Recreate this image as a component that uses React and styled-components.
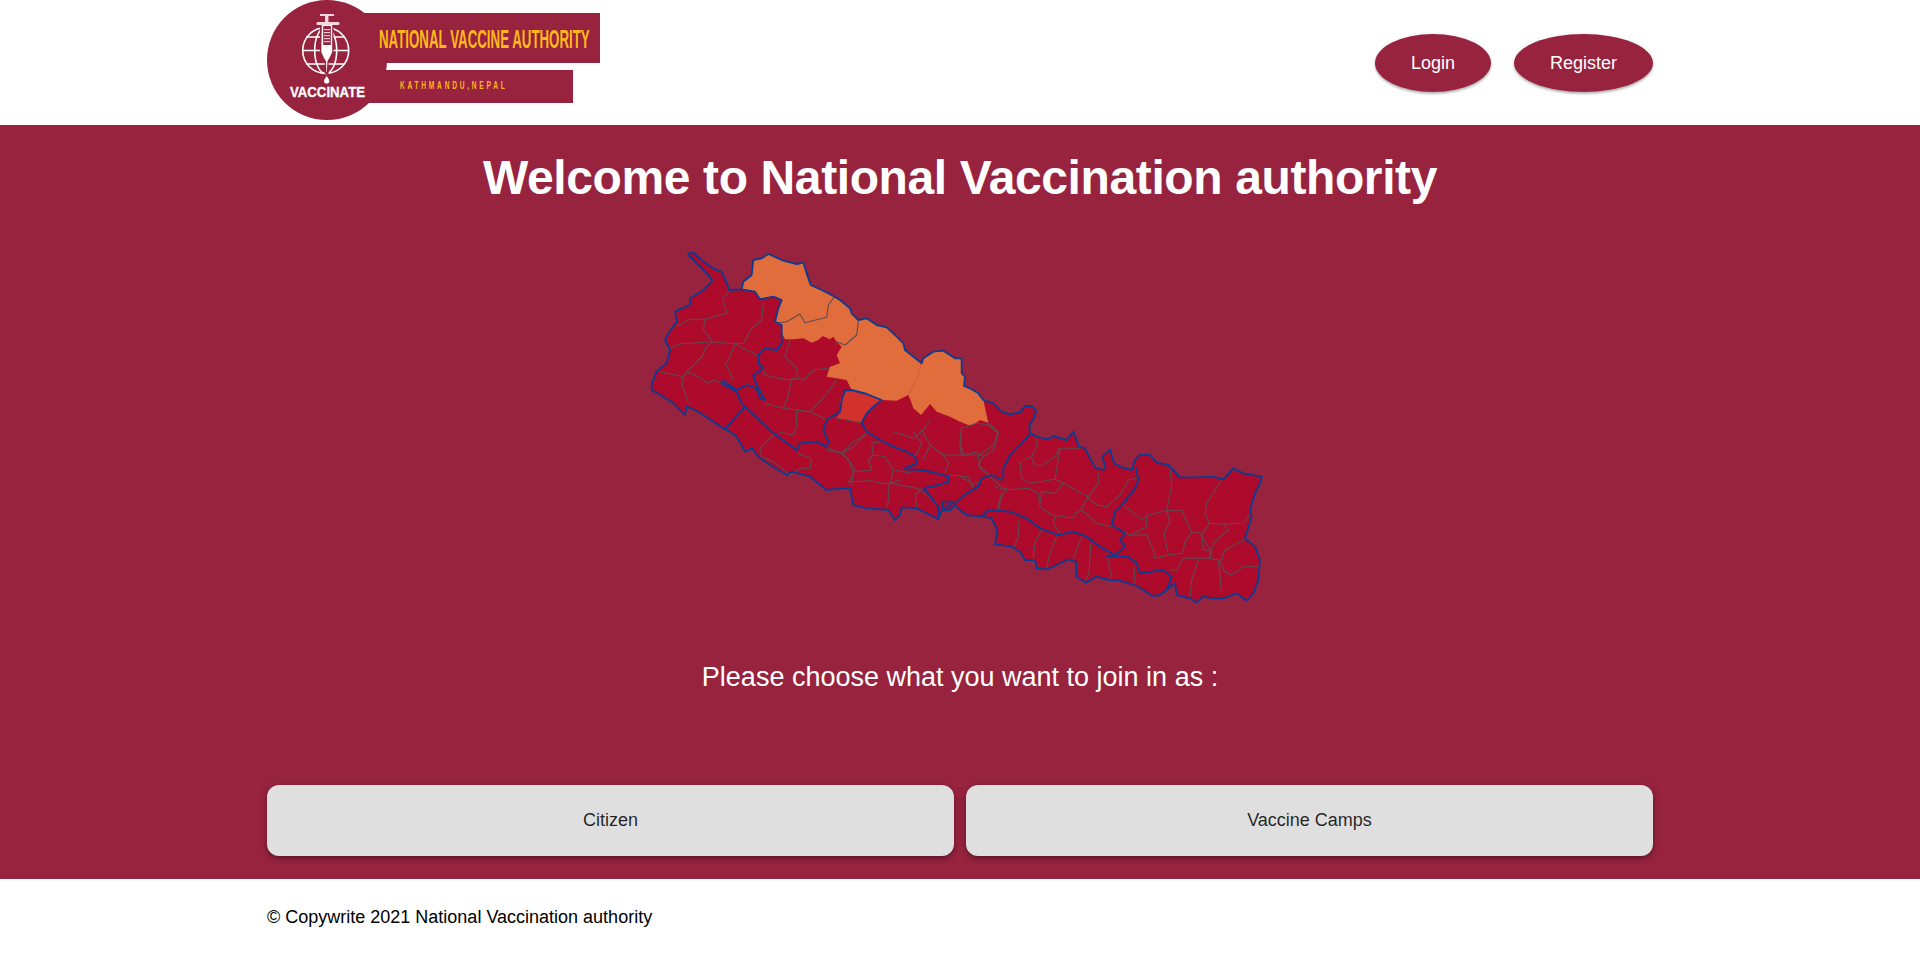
import React from "react";
import styled, { createGlobalStyle } from "styled-components";

const GlobalStyle = createGlobalStyle`
  html, body {
    margin: 0;
    padding: 0;
    background: #fff;
    font-family: "Liberation Sans", Arial, sans-serif;
  }
`;

const Header = styled.header`
  height: 125px;
  padding: 0 267px;
  box-sizing: border-box;
  display: flex;
  align-items: flex-start;
  justify-content: space-between;
  background: #fff;
`;

const Logo = styled.svg`
  width: 340px;
  height: 125px;
  display: block;
`;

const HeaderActions = styled.nav`
  display: flex;
  gap: 23px;
  padding-top: 34px;
`;

const PillButton = styled.button`
  width: ${(props) => props.$width}px;
  height: 58px;
  border: 0;
  padding: 0;
  border-radius: 50%;
  background: #97233f;
  color: #fff;
  font: 18px "Liberation Sans", Arial, sans-serif;
  box-shadow: 0 2px 2px rgba(0, 0, 0, 0.2), 0 1px 4px rgba(0, 0, 0, 0.14);
  cursor: pointer;
`;

const Main = styled.main`
  background: #97233f;
  padding: 25px 267px 23px;
  display: flex;
  flex-direction: column;
  align-items: center;
`;

const Title = styled.h1`
  margin: 0;
  font-size: 48px;
  line-height: 55px;
  letter-spacing: -0.39px;
  font-weight: 700;
  color: #fff;
`;

const MapFigure = styled.svg`
  display: block;
  width: 640px;
  height: 370px;
  margin-top: 35px;
`;

const Prompt = styled.p`
  margin: 52px 0 0;
  font-size: 27px;
  line-height: 31px;
  color: #fff;
`;

const Choices = styled.div`
  width: 100%;
  margin-top: 92px;
  display: grid;
  grid-template-columns: 1fr 1fr;
  gap: 12px;
`;

const ChoiceButton = styled.button`
  height: 71px;
  border: 0;
  border-radius: 12px;
  background: #dfdfdf;
  color: rgba(0, 0, 0, 0.85);
  font: 18px "Liberation Sans", Arial, sans-serif;
  box-shadow: 0 2px 4px -1px rgba(0, 0, 0, 0.2), 0 4px 5px rgba(0, 0, 0, 0.14),
    0 1px 10px rgba(0, 0, 0, 0.12);
  cursor: pointer;
`;

const Footer = styled.footer`
  height: 72px;
  padding: 2px 267px 0;
  display: flex;
  align-items: center;
  font-size: 18px;
  color: #000;
`;

// map traced from the picture, in 3x pixels of the (640,240) corner
const fromEast = (s) => shift(s, 960, 420);
const fromMid = (s) => shift(s, 510, 540);

function shift(s, dx, dy) {
  return s
    .trim()
    .split(/\s+/)
    .map((p) => {
      const [x, y] = p.split(",").map(Number);
      return `${x + dx},${y + dy}`;
    })
    .join(" ");
}

const northEdge =
  "305,148 310,125 335,105 340,60 365,55 385,42 430,62 470,72 490,68 500,100 512,135 545,150 580,168 600,180 630,205 635,220 655,240 680,235 710,255 740,262 770,290 790,310 795,330 845,370";

const outline = [
  "145,40 160,38 190,65 225,88 245,95 258,125 268,150",
  northEdge,
  "850,355 880,335 910,332 945,355 965,355 965,400 975,410 972,438 990,445 1015,460",
  fromEast("70,60 100,70 125,95 150,103 180,97 195,78 215,78 228,92 222,115 208,135 210,160 230,170 265,178 280,168 320,180 340,155 348,175 355,198 375,205 405,262 430,270 437,262 427,230 450,208 462,250 485,262 515,270 525,240 540,225 570,225 590,248 625,255 660,292 700,292 760,290 790,298 820,265 850,280 905,290 900,310 885,340 870,390 875,410 855,475 885,500 900,540 895,600 880,640 860,662 830,640 790,655 760,655 730,650 710,668 690,655 650,645 645,610 620,630 600,645 578,648 530,618 480,602 445,600 410,590 378,608 350,590 348,545 325,538 290,555 260,568 230,565 225,540 195,540 180,515 155,500 105,493 112,450 95,415 65,410 20,405 0,390"),
  fromMid("435,255 420,270 395,272 385,297 380,295 360,285 320,265 275,262 270,285 255,300 235,270 170,265 130,255 120,205 100,205 50,210"),
  "510,710 455,695 440,705 390,675 355,650 335,625 315,635 290,590 258,568 250,565 190,525 165,510 140,500 135,525 100,490 70,470 35,450 35,430 50,395 60,385 80,370 85,350 90,330 75,300 85,280 110,245 105,215 125,205 150,195 150,175 190,150 218,122 200,100 170,70 145,45 145,40",
].join(" ");

const orangeAreas = [
  `${northEdge} 830,420 805,465 770,482 725,480 680,460 635,450 620,420 590,415 560,410 570,380 600,370 590,345 605,320 590,305 580,290 570,298 548,288 535,300 515,308 490,295 460,298 435,298 425,280 425,255 405,245 415,205 425,180 400,170 360,178 345,155`,
  "845,370 850,355 880,335 910,332 945,355 965,355 965,400 975,410 972,438 990,445 1015,460 1030,480 1045,548 1020,540 1000,555 985,555 960,545 930,530 890,515 870,492 843,525 820,505 815,490 805,465 830,420",
];

const darkArea =
  "615,452 635,450 680,462 725,480 700,500 680,520 665,548 620,540 590,535 605,510 600,480";

const districtLines = [
  "268,150 248,180 262,220 195,238 150,238 110,258",
  "195,238 190,270 218,305 120,312 80,330",
  "370,190 365,240 335,265 310,310 285,312 218,305 195,325 190,345 140,395 175,410 205,430 225,420 245,430",
  "285,312 265,360 255,368 280,420",
  "285,312 350,345",
  "60,395 130,410 125,430 145,490",
  "130,410 140,395",
  "370,385 375,405 440,420 470,415 490,420 520,390 565,385",
  "435,350 450,300",
  "435,350 470,385 475,415 455,420 440,480 430,505 370,490",
  "430,505 510,515 545,480 590,420",
  "510,515 470,510 470,560 460,585 415,575",
  "510,515 560,540",
  "412,585 400,585 360,625 365,650 400,665 450,705",
  "450,705 480,685 510,685 515,655 470,640",
  "590,305 615,315 650,285 655,245",
  "405,250 440,245 480,222 495,248 560,232 565,195 585,168",
  "590,535 620,540 665,548",
  "565,625 605,640 640,605 680,580",
  "605,635 625,660 640,695 635,735",
  ...[
    "50,90 95,100 120,125 135,150 115,190",
    "95,100 130,80 165,45",
    "135,155 185,150 175,120 190,105 185,70 210,65",
    "190,105 225,110 250,150 240,190",
    "255,150 300,160",
    "240,190 270,180",
    "115,185 185,182 210,190 240,190 300,200 340,210",
    "235,195 235,240 230,265",
    "330,210 315,225 320,260",
    "360,235 335,215",
    "250,35 310,55 340,30 360,0",
    "310,35 335,70 315,110",
    "360,75 400,105 415,130 405,160",
    "340,120 360,75 335,30",
    "400,105 460,105 500,95 520,110 505,135 530,160",
    "460,105 450,65 455,25 500,10 535,15 565,40 550,90 520,110",
    "415,165 475,170 485,195 510,185",
    "540,170 580,205 590,205",
    "565,270 575,230 590,205",
  ].map(fromMid),
  ...[
    "5,135 0,200 5,225 60,225 100,195 115,155 85,130",
    "55,225 60,265 90,285",
    "0,290 30,305 40,325",
    "105,320 135,330 205,325 235,340 240,380 275,405 340,415 345,400 365,390 410,430 455,440",
    "125,335 112,390",
    "180,245 185,295 210,310 285,298 300,205 360,205",
    "225,170 232,195 215,230 190,240",
    "215,235 225,255 245,258 285,230 298,205",
    "285,298 310,310 385,350 415,310 415,280",
    "310,310 285,340 245,335 240,370",
    "385,350 365,385",
    "380,350 410,375 440,380 480,345 505,300 530,295",
    "285,410 280,430 300,460",
    "177,420 175,470 160,505",
    "245,450 225,490 220,530 228,565",
    "290,470 270,520 260,565",
    "365,470 340,535",
    "392,490 388,570 378,605",
    "440,525 455,590 440,600",
    "522,560 525,610",
    "490,375 545,418 565,405 615,392 665,390 695,458 720,458 750,510 750,535 670,535 650,570 630,570",
    "630,265 635,320 620,390 630,425 612,460 625,525 668,520 675,485 695,460",
    "785,300 740,370 735,400 748,430 790,432 850,430 870,405",
    "748,430 725,465 730,510 750,510",
    "790,432 805,450 760,490 750,535 775,540 795,575 815,585 850,560 900,560",
    "855,478 795,510 785,540 775,540",
    "460,440 510,465 560,465 580,510 585,535 625,525",
    "510,465 560,440 560,405",
    "715,540 695,600 690,650",
    "775,540 785,640",
  ].map(fromEast),
];

const provinceLines = [
  "305,148 345,155 360,178 400,170 425,180 415,205 405,245 425,255 425,310 410,330 375,325 355,345 355,370 370,385 340,405 350,435 375,480 360,475 350,445 320,435 290,450 250,422 245,430 290,455 305,490 315,500 255,568",
  "315,500 400,580 470,630 480,610 530,605 560,620 565,605 550,570 560,540 600,515 605,480 615,452 635,450 680,462 725,480 700,500 680,520 665,548 680,575 720,600 760,620 800,635 825,650 830,670 795,685",
  fromMid("285,148 340,150 380,160 415,170 415,185 385,195 340,205 350,215 365,235 385,260 385,295"),
  fromMid("395,245 430,245 400,270 395,245"),
  fromMid("435,250 470,220 505,200 515,175 545,165 575,180"),
  fromEast("130,295 130,265 150,225 180,195 208,165"),
  fromEast("528,265 535,300 525,325 490,370 465,395 455,435 495,460 480,480 495,500 465,525 440,530 505,530 530,550 540,580 610,570 635,590 620,630"),
  fromEast("65,410 85,390 150,395 200,415 240,445 295,465 340,455 380,470 420,500 465,525"),
];

const MapRegion = styled.polygon`
  fill: ${(props) => props.$fill};
`;

const MapLine = styled.polyline`
  fill: none;
  stroke: ${(props) => props.$stroke};
  stroke-width: ${(props) => props.$weight};
  stroke-linejoin: round;
  stroke-linecap: round;
`;

function NepalMap() {
  return (
    <MapFigure viewBox="0 0 1920 1110" aria-label="Map of Nepal">
      <MapRegion points={outline} $fill="#ad0a2c" />
      {orangeAreas.map((points) => (
        <MapRegion key={points} points={points} $fill="#e16d3d" />
      ))}
      <MapRegion points={darkArea} $fill="#d3312b" />
      {districtLines.map((points) => (
        <MapLine key={points} points={points} $stroke="#5d4c50" $weight={3.2} />
      ))}
      {provinceLines.map((points) => (
        <MapLine key={points} points={points} $stroke="#0b3c92" $weight={5.5} />
      ))}
      <MapLine points={outline} $stroke="#0b3c92" $weight={5.5} />
    </MapFigure>
  );
}

function BrandLogo() {
  return (
    <Logo viewBox="17 0 340 125" aria-label="National Vaccine Authority">
      <rect x="80" y="13" width="270" height="50" fill="#97233f" />
      <rect x="80" y="70" width="243" height="33" fill="#97233f" />
      <circle cx="77" cy="60" r="60" fill="#97233f" />
      <rect x="137" y="63" width="213" height="7" fill="#fff" />
      <g fill="none" stroke="#fff" strokeWidth="1.6">
        <circle cx="75.7" cy="50.5" r="23" />
        <ellipse cx="75.7" cy="50.5" rx="11" ry="23" />
        <path d="M56 37h39M52.7 50.5h46M56 64h39" />
      </g>
      <path d="M71.5 25h10.5v27l-3 6-2 3.5v11h-.6v-11l-2-3.5-3-6z" fill="#97233f" stroke="#97233f" strokeWidth="3" />
      <g fill="#f3d7de">
        <rect x="70" y="14" width="14" height="2" />
        <rect x="75" y="16" width="3.4" height="7" />
        <rect x="66.5" y="22" width="23" height="3" rx="1.2" />
      </g>
      <path d="M71.8 25h10.4v27l-2.5 5.5-2.2 3.5-.6 11h-.4l-.6-11-2.2-3.5-2.4-5.5z" fill="#fff" />
      <rect x="73.2" y="26" width="7.6" height="19" fill="#97233f" />
      <g fill="#f0c6d0">
        <rect x="74" y="29" width="6" height="1.2" />
        <rect x="74" y="32" width="6" height="1.2" />
        <rect x="74" y="35" width="6" height="1.2" />
        <rect x="74" y="38" width="6" height="1.2" />
        <rect x="74" y="41" width="6" height="1.2" />
      </g>
      <path d="M76.7 76c1.8 2.5 2.6 3.8 2.6 5a2.6 2.6 0 0 1-5.2 0c0-1.2.8-2.5 2.6-5z" fill="#fff" />
      <text x="40" y="97" fontFamily="Liberation Sans, sans-serif" fontWeight="700" fontSize="14" fill="#fff" stroke="#fff" strokeWidth=".3" textLength="75" lengthAdjust="spacingAndGlyphs">VACCINATE</text>
      <text transform="translate(129 48) scale(.532 1)" fontFamily="Liberation Sans, sans-serif" fontWeight="700" fontSize="25" fill="#ffb71b">NATIONAL VACCINE AUTHORITY</text>
      <text transform="translate(150 89) scale(.6 1)" fontFamily="Liberation Sans, sans-serif" fontWeight="700" fontSize="11" letterSpacing="4.6" fill="#ffb71b">KATHMANDU,NEPAL</text>
    </Logo>
  );
}

export default function App() {
  return (
    <>
      <GlobalStyle />
      <Header>
        <BrandLogo />
        <HeaderActions>
          <PillButton $width={116}>Login</PillButton>
          <PillButton $width={139}>Register</PillButton>
        </HeaderActions>
      </Header>
      <Main>
        <Title>Welcome to National Vaccination authority</Title>
        <NepalMap />
        <Prompt>Please choose what you want to join in as :</Prompt>
        <Choices>
          <ChoiceButton>Citizen</ChoiceButton>
          <ChoiceButton>Vaccine Camps</ChoiceButton>
        </Choices>
      </Main>
      <Footer>© Copywrite 2021 National Vaccination authority</Footer>
    </>
  );
}
